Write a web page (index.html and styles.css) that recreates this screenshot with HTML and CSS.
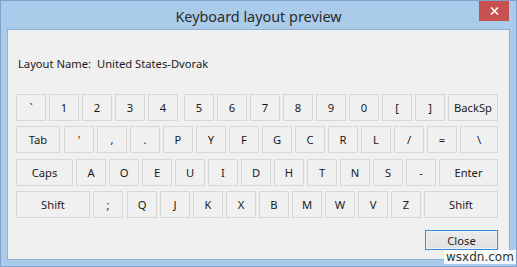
FILE: index.html
```html
<!DOCTYPE html>
<html>
<head>
<meta charset="utf-8">
<link rel="stylesheet" href="styles.css">
</head>
<body>
<div class="window">
  <div class="titlebar">
    <div class="title">Keyboard layout preview</div>
    <div class="close-x">
      <svg width="9" height="8" viewBox="0 0 9 8"><path d="M1 0.5 L8 7.5 M8 0.5 L1 7.5" stroke="#fff" stroke-width="1.6"/></svg>
    </div>
  </div>
  <div class="content">
    <div class="layout-name"><span class="lbl">Layout Name:</span><span class="val">United States-Dvorak</span></div>
    <div class="keyboard">
      <div class="row r1">
        <div class="key">`</div><div class="key">1</div><div class="key">2</div><div class="key">3</div><div class="key">4</div><div class="key gap6">5</div><div class="key">6</div><div class="key">7</div><div class="key">8</div><div class="key">9</div><div class="key">0</div><div class="key">[</div><div class="key">]</div><div class="key w50">BackSp</div>
      </div>
      <div class="row r2">
        <div class="key w44">Tab</div><div class="key gap4">'</div><div class="key">,</div><div class="key">.</div><div class="key">P</div><div class="key">Y</div><div class="key">F</div><div class="key">G</div><div class="key">C</div><div class="key">R</div><div class="key">L</div><div class="key">/</div><div class="key">=</div><div class="key w38">\</div>
      </div>
      <div class="row r3">
        <div class="key w57">Caps</div><div class="key">A</div><div class="key">O</div><div class="key">E</div><div class="key">U</div><div class="key">I</div><div class="key">D</div><div class="key">H</div><div class="key">T</div><div class="key">N</div><div class="key">S</div><div class="key">-</div><div class="key w59">Enter</div>
      </div>
      <div class="row r4">
        <div class="key w74">Shift</div><div class="key">;</div><div class="key gap4">Q</div><div class="key">J</div><div class="key">K</div><div class="key">X</div><div class="key">B</div><div class="key">M</div><div class="key">W</div><div class="key">V</div><div class="key">Z</div><div class="key w74">Shift</div>
      </div>
    </div>
    <div class="actions">
      <button class="btn">Close</button>
    </div>
  </div>
  <div class="watermark">wsxdn.com</div>
</div>
</body>
</html>
```

FILE: styles.css
```css
html, body {
  margin: 0;
  padding: 0;
  background: #a9c9e8;
}
body {
  width: 517px;
  height: 267px;
  overflow: hidden;
  font-family: "Noto Sans", "Open Sans", sans-serif;
}
.window {
  position: relative;
  box-sizing: border-box;
  width: 517px;
  height: 267px;
  background: #aacbea;
  border: 1px solid #7fa2c8;
  padding: 0 6px 6px 6px;
  display: flex;
  flex-direction: column;
}
.titlebar {
  height: 28px;
  flex: none;
  display: flex;
  align-items: center;
  justify-content: center;
  position: relative;
}
.title {
  font-family: "Noto Sans", sans-serif;
  font-size: 14.4px;
  color: #2b2b2b;
  margin-top: 3px;
}
.close-x {
  position: absolute;
  right: 1px;
  top: 0;
  width: 30px;
  height: 20px;
  background: #c75050;
  display: flex;
  align-items: center;
  justify-content: center;
}
.content {
  flex: 1;
  background: #f0f0f0;
  border: 1px solid #8fb0d2;
  padding: 0 11px 0 8px;
  display: flex;
  flex-direction: column;
  font-size: 11.2px;
  color: #1a1a1a;
}
.layout-name {
  margin-top: 26px;
  padding-left: 2px;
  height: 16px;
  line-height: 16px;
  display: flex;
}
.lbl {
  flex: none;
  width: 79px;
}
.keyboard {
  margin-top: 22px;
  display: flex;
  flex-direction: column;
}
.row {
  display: flex;
  gap: 3px;
}
.r2 { margin-top: 5px; }
.r3 { margin-top: 6px; }
.r4 { margin-top: 5px; }
.key {
  box-sizing: border-box;
  width: 30px;
  height: 27px;
  border: 1px solid #d7d7d7;
  background: #f0f0f0;
  display: flex;
  align-items: center;
  justify-content: center;
  font-size: 11.2px;
  color: #1a1a1a;
}
.gap6 { margin-left: 3px; }
.gap4 { margin-left: 1px; }
.w38 { width: 38px; }
.w44 { width: 44px; }
.w50 { width: 50px; }
.w57 { width: 57px; }
.w59 { width: 59px; }
.w74 { width: 74px; }
.actions {
  margin-top: 12px;
  display: flex;
  justify-content: flex-end;
}
.btn {
  box-sizing: border-box;
  width: 73px;
  height: 20px;
  border: 1px solid #3c8bd6;
  background: linear-gradient(#ececec, #e1e1e1);
  font-family: "Noto Sans", sans-serif;
  font-size: 11.2px;
  color: #1a1a1a;
  padding: 0;
  box-shadow: inset 0 0 0 1px #e8f2fb;
}
.watermark {
  position: absolute;
  left: 443px;
  top: 249px;
  padding: 0 2px;
  background: rgba(255,255,255,0.85);
  font-family: "DejaVu Sans", sans-serif;
  font-size: 12px;
  line-height: 14px;
  color: #333;
}
```
